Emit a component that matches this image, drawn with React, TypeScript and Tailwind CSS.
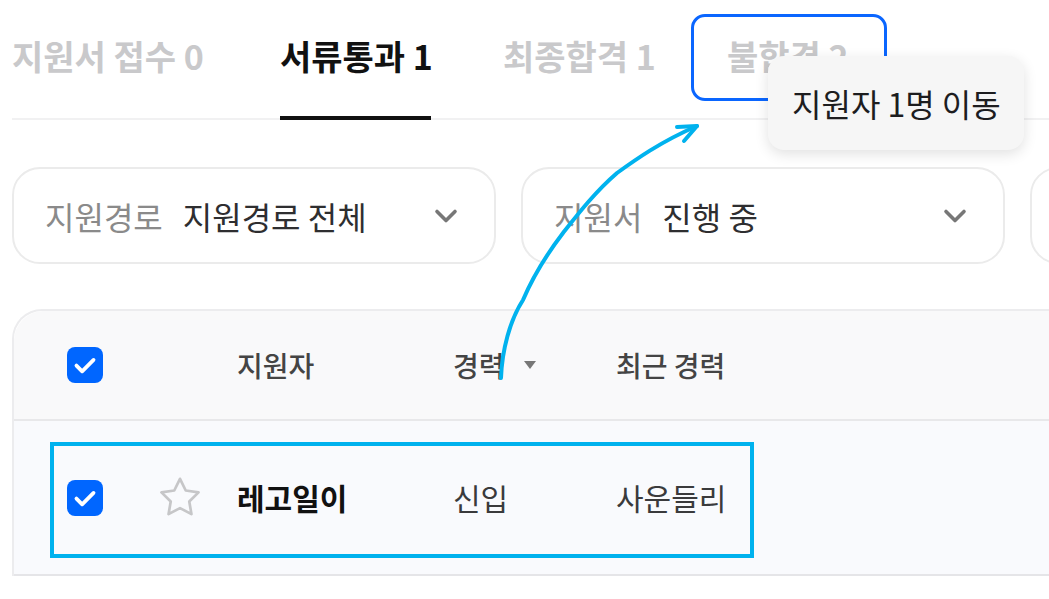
import { ChevronDown } from "lucide-react";

const font = { fontFamily: '"Noto Sans CJK KR", "Noto Sans", sans-serif' };

function Check() {
  return (
    <span className="flex h-[36px] w-[36px] items-center justify-center rounded-[8px] bg-[#0066ff]">
      <svg width="36" height="36" viewBox="0 0 24 24" fill="none">
        <path d="M6.3 12.4l3.8 3.8L17.7 8.6" stroke="white" strokeWidth="2.5" strokeLinecap="round" strokeLinejoin="round" />
      </svg>
    </span>
  );
}

function Filter({ label, value }: { label: string; value: string }) {
  return (
    <div className="flex h-[97px] w-[484px] shrink-0 items-center rounded-[28px] border-2 border-[#ebebeb] bg-white pl-[31px] pr-[30px]">
      <span className="text-[32px] text-[#8a8a8a]">{label}</span>
      <span className="ml-[20px] flex-1 text-[32px] text-[#2e2e30]">{value}</span>
      <ChevronDown size={36} strokeWidth={2.4} className="text-[#777]" />
    </div>
  );
}

export default function App() {
  return (
    <div className="relative h-[599px] w-[1049px] overflow-hidden bg-white" style={font}>
      {/* tabs */}
      <div className="relative ml-[12px]">
        <div className="flex h-[118px] items-center pb-[8px] text-[34px] font-bold text-[#c9c9cb]">
          <span className="w-[268px]">지원서 접수 0</span>
          <span className="relative w-[223px] text-[#111]">
            서류통과 1
            <span className="absolute bottom-[-39px] left-0 h-[4px] w-[151px] bg-[#111]"></span>
          </span>
          <span className="w-[224px]">최종합격 1</span>
          <span>불합격 2</span>
        </div>
        <div className="h-[2px] bg-[#f1f1f2]"></div>
      </div>

      {/* highlighted target tab */}
      <div className="absolute left-[691px] top-[14px] h-[87px] w-[196px] rounded-[14px] border-[3px] border-[#0a66ff]"></div>

      {/* tooltip */}
      <div className="absolute left-[768px] top-[56px] flex h-[94px] w-[256px] items-center rounded-[16px] bg-[#f6f6f6] pl-[24px] text-[32px] text-[#1d1d1f] shadow-[0_4px_14px_rgba(0,0,0,0.12)]">
        지원자 1명 이동
      </div>

      {/* filters */}
      <div className="mt-[47px] ml-[12px] flex gap-[25px]">
        <Filter label="지원경로" value="지원경로 전체" />
        <Filter label="지원서" value="진행 중" />
        <Filter label="" value="" />
      </div>

      {/* table */}
      <div className="ml-[12px] mt-[45px] rounded-tl-[30px] border-l-2 border-t-2 border-[#ececee]">
        <div className="flex h-[110px] items-center rounded-tl-[30px] border-b-2 border-[#e8e8ea] bg-[#f9f9fa] text-[28px] font-medium text-[#444]">
          <span className="ml-[53px] w-[170px]"><Check /></span>
          <span className="w-[216px]">지원자</span>
          <span className="flex w-[163px] items-center gap-[18px]">
            경력
            <svg width="14" height="10" viewBox="0 0 14 10"><path d="M1 1h12L7 9z" fill="#777" /></svg>
          </span>
          <span>최근 경력</span>
        </div>
        <div className="flex h-[155px] items-center border-b-2 border-[#e5e5e8] bg-[#f9fafd] text-[30px] text-[#3a3a3c]">
          <span className="ml-[53px] w-[88px]"><Check /></span>
          <span className="w-[82px]">
            <svg width="50" height="50" viewBox="0 0 24 24" fill="none">
              <path d="M12 2.8l2.75 5.6 6.15.9-4.45 4.35 1.05 6.1L12 16.85 6.5 19.75l1.05-6.1L3.1 9.3l6.15-.9z" stroke="#c6c6c8" strokeWidth="1.3" strokeLinejoin="round" />
            </svg>
          </span>
          <span className="w-[216px] font-bold text-[#111]">레고일이</span>
          <span className="w-[163px]">신입</span>
          <span>사운들리</span>
        </div>
      </div>

      {/* annotation box around the row */}
      <div className="absolute left-[50px] top-[442px] h-[116px] w-[704px] border-[4px] border-[#00b2ee]"></div>

      {/* annotation arrow */}
      <svg className="pointer-events-none absolute left-0 top-0" width="1049" height="599" viewBox="0 0 1049 599" fill="none">
        <path
          d="M501 378 C502 350 510 320 523 300 C535 272 550 250 563 233 C578 214 595 192 617 173 C635 160 660 142 697 126"
          stroke="#00b2ee"
          strokeWidth="4"
          strokeLinecap="round"
        />
        <path d="M677 127 L697 126 L684 141" stroke="#00b2ee" strokeWidth="4" strokeLinecap="round" strokeLinejoin="round" />
      </svg>
    </div>
  );
}
